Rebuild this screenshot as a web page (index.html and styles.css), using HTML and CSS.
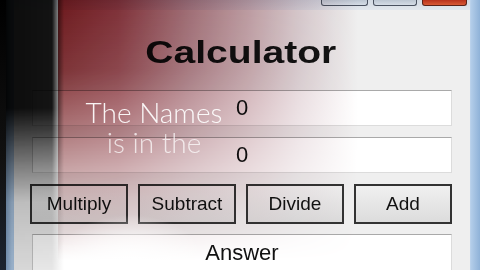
FILE: index.html
```html
<!DOCTYPE html>
<html>
<head>
<meta charset="utf-8">
<link rel="stylesheet" href="styles.css">
</head>
<body>
<div class="screen">
  <div class="titlebar">
    <div class="caption-btns">
      <span class="cbtn cbtn-min"></span>
      <span class="cbtn cbtn-max"></span>
      <span class="cbtn cbtn-close"></span>
    </div>
  </div>
  <div class="client">
    <h1 class="title"><span class="title-text">Calculator</span></h1>
    <div class="field">0</div>
    <div class="field">0</div>
    <div class="ops">
      <button class="op">Multiply</button>
      <button class="op">Subtract</button>
      <button class="op">Divide</button>
      <button class="op">Add</button>
    </div>
    <div class="field answer">Answer</div>
  </div>

  <div class="shade-black"></div>
  <div class="shade-edge"></div>
  <div class="shade-red"></div>
  <div class="glare"></div>
  <div class="caption">
    <div class="cap-line">The Names</div>
    <div class="cap-line cap-faded">is in the</div>
  </div>
</div>
</body>
</html>
```

FILE: styles.css
```css
* { box-sizing: border-box; }
html, body { margin: 0; padding: 0; }
body {
  width: 480px;
  height: 270px;
  overflow: hidden;
  font-family: "Liberation Sans", Arial, sans-serif;
}
.screen {
  position: relative;
  width: 480px;
  height: 270px;
  overflow: hidden;
  display: flex;
  flex-direction: column;
  padding: 0 10px 0 14px;
  background: linear-gradient(90deg, #5d7fa6 0, #7f9fc2 6px, #a9c3df 12px, #a9c3df 466px, #d7e6f5 468px, #b3cde9 471px, #8fb2d8 480px);
}
.titlebar {
  flex: 0 0 10px;
  height: 10px;
  background: linear-gradient(180deg, #d3dae3, #e2e7ed);
  display: flex;
  justify-content: flex-end;
  padding-right: 3px;
}
.caption-btns {
  display: flex;
  gap: 5px;
  height: 6px;
}
.cbtn {
  display: block;
  height: 6px;
  border: 1px solid #4a5260;
  border-top: none;
  border-radius: 0 0 3px 3px;
  background: linear-gradient(180deg, #bcc6d2, #d5dde6);
}
.cbtn-min { width: 47px; }
.cbtn-max { width: 44px; }
.cbtn-close {
  width: 45px;
  background: linear-gradient(180deg, #b8321c, #d85a36);
  border-color: #5a2218;
}
.client {
  flex: 1 0 auto;
  background: #efefef;
  padding: 0 18px 0 16px;
  display: flex;
  flex-direction: column;
}
.client > * { flex-shrink: 0; }
.title {
  margin: 0;
  padding-top: 23px;
  height: 80px;
  text-align: center;
  font-size: 31px;
  line-height: 40px;
  font-weight: bold;
  color: #141414;
}
.title-text {
  display: inline-block;
  transform: scaleX(1.26);
}
.field {
  height: 36px;
  margin: 0 0 11px 2px;
  background: #ffffff;
  border: 1px solid #dcdcdc;
  border-top-color: #a9a9a9;
  border-left-color: #c8c8c8;
  text-align: center;
  font-size: 22px;
  line-height: 34px;
  color: #111;
}
.ops {
  display: grid;
  grid-template-columns: repeat(4, 1fr);
  gap: 10px;
  height: 40px;
  margin-bottom: 10px;
}
.op {
  height: 40px;
  margin: 0;
  padding: 0;
  border: 2px solid #333;
  background: linear-gradient(180deg, #f0f0f0 0, #e6e6e6 50%, #dcdcdc 100%);
  font-family: "Liberation Sans", Arial, sans-serif;
  font-size: 19px;
  color: #111;
}
.answer {
  height: 40px;
  margin-bottom: 0;
  line-height: 36px;
}

/* video overlay on top of the screenshot */
.shade-black {
  position: absolute;
  left: 0;
  top: 0;
  width: 66px;
  height: 270px;
  background: linear-gradient(90deg, rgba(0,0,0,1) 0, rgba(0,0,0,.95) 10px, rgba(0,0,0,.92) 52px, rgba(0,0,0,0) 64px);
  -webkit-mask-image: linear-gradient(180deg, #000 0, #000 40%, rgba(0,0,0,.65) 55%, rgba(0,0,0,.22) 75%, rgba(0,0,0,.1) 100%);
  mask-image: linear-gradient(180deg, #000 0, #000 40%, rgba(0,0,0,.65) 55%, rgba(0,0,0,.22) 75%, rgba(0,0,0,.1) 100%);
}
.shade-edge {
  position: absolute;
  left: 0;
  top: 0;
  width: 6px;
  height: 270px;
  background: linear-gradient(180deg, #000 0, #111 60%, #1c2430 100%);
}
.shade-red {
  position: absolute;
  left: 58px;
  top: 0;
  width: 300px;
  height: 270px;
  mix-blend-mode: multiply;
  background: linear-gradient(90deg, #741a1e 0, #86323a 60px, #a8727a 130px, #c8a4aa 190px, #e2d2d6 240px, #ffffff 300px);
  -webkit-mask-image: linear-gradient(180deg, #000 0, rgba(0,0,0,.88) 70px, rgba(0,0,0,.55) 140px, rgba(0,0,0,.25) 200px, rgba(0,0,0,0) 260px);
  mask-image: linear-gradient(180deg, #000 0, rgba(0,0,0,.88) 70px, rgba(0,0,0,.55) 140px, rgba(0,0,0,.25) 200px, rgba(0,0,0,0) 260px);
}
.glare {
  position: absolute;
  left: 50px;
  top: 180px;
  width: 160px;
  height: 90px;
  background: radial-gradient(ellipse 75px 45px at 80px 80px, rgba(255,255,255,.95) 0, rgba(255,255,255,.55) 50%, rgba(255,255,255,0) 100%);
}
.caption {
  position: absolute;
  left: 58px;
  top: 97px;
  width: 192px;
  text-align: center;
  font-family: Lato, "Open Sans", sans-serif;
  font-weight: 300;
  font-size: 28px;
  line-height: 30px;
  color: rgba(255,255,255,.92);
}
.cap-faded {
  color: rgba(255,255,255,.72);
}
```
